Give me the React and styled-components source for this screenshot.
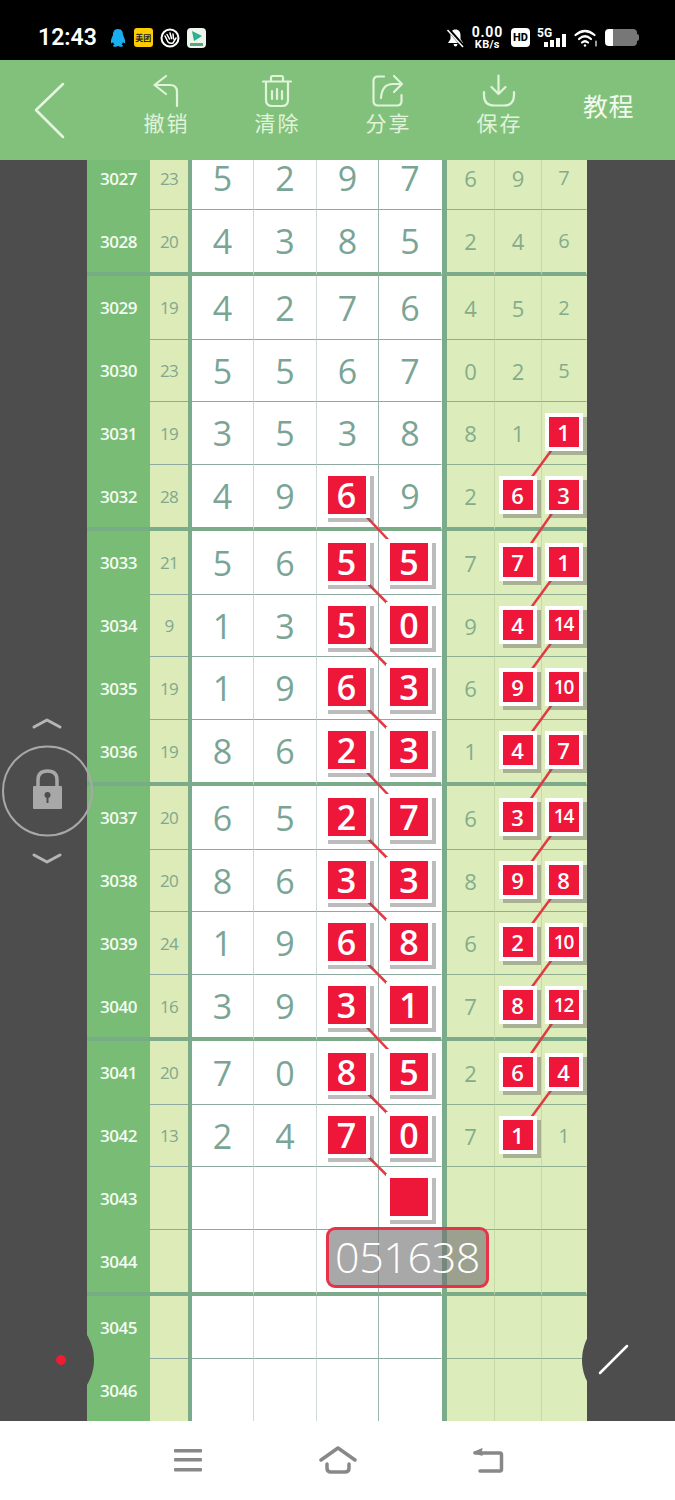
import React from 'react';
import styled, { createGlobalStyle } from 'styled-components';

const Global = createGlobalStyle`
  html, body { margin: 0; padding: 0; background: #fff; }
  * { box-sizing: border-box; }
`;
const CJK = '"Noto Sans CJK SC", "Noto Sans", sans-serif';
const NUM = '"Open Sans", "Noto Sans", sans-serif';

const Page = styled.div`
  width: 675px; height: 1500px; display: flex; flex-direction: column;
`;
const StatusBar = styled.div`
  height: 60px; background: #000; color: #fff; display: flex; align-items: center;
  justify-content: space-between; padding: 15px 38px 0 38px; flex: none;
`;
const StatusGroup = styled.div`
  display: flex; align-items: center; gap: ${p => p.$gap || 6}px;
`;
const Clock = styled.div`
  font: 600 23px Roboto, sans-serif; margin-right: 5px;
`;
const Yellow = styled.div`
  width: 19px; height: 19px; background: #ffcc00; border-radius: 3px; color: #222;
  font: 700 8px/19px ${CJK}; text-align: center;
`;
const Speed = styled.div`
  display: flex; flex-direction: column; align-items: center; font-family: Roboto, sans-serif; font-weight: 700;
`;
const SpeedTop = styled.span` font-size: 14px; line-height: 13px; letter-spacing: .8px; `;
const SpeedBottom = styled.span` font-size: 11px; line-height: 11px; letter-spacing: .3px; `;
const HD = styled.div`
  width: 19px; height: 19px; background: #fff; border-radius: 4px; color: #000;
  font: 800 11px/19px Roboto, sans-serif; text-align: center; margin-left: 1px;
`;
const Signal = styled.div` position: relative; width: 30px; height: 20px; `;
const FiveG = styled.span`
  position: absolute; left: 0; top: -1px; font: 700 12px/12px Roboto, sans-serif; color: #fff;
`;
const Battery = styled.div`
  width: 32px; height: 17px; border-radius: 4px; background: linear-gradient(90deg, #fff 0 8px, #777 8px);
  position: relative;
  &::after { content: ''; position: absolute; right: -2px; top: 5px; width: 2px; height: 7px; background: #777; border-radius: 0 2px 2px 0; }
`;

const Toolbar = styled.div`
  height: 100px; background: #82c17c; flex: none; display: grid; position: relative; z-index: 6;
  grid-template-columns: 110px repeat(5, 111px) 10px; color: #e0f4da;
`;
const BackCell = styled.div` padding: 22px 0 0 33px; `;
const Tool = styled.div`
  display: flex; flex-direction: column; align-items: center; padding-top: 14px;
`;
const ToolLabel = styled.div`
  font: 400 21px/24px ${CJK}; letter-spacing: 2px; margin-right: -2px; margin-top: 2px;
`;
const Tutorial = styled.div`
  font: 400 25px/100px ${CJK}; color: #f1faee; text-align: center; letter-spacing: .5px; margin-top: -5px; margin-left: -2px;
`;

const Stage = styled.div`
  flex: 1; background: #4d4d4d; display: flex; justify-content: flex-start; padding-left: 87px; position: relative;
`;
const Table = styled.div` width: 500px; height: 100%; position: relative; `;
const Row = styled.div`
  display: grid; height: ${p => p.$h}px;
  grid-template-columns: 63px 38px 4px 62px 63px 62px 63px 5px 48px 47px 45px;
`;
const Base = styled.div`
  display: flex; align-items: center; justify-content: center; line-height: 1;
  padding-bottom: ${p => p.$lift || 0}px;
  border-bottom: ${p => (p.$thick ? 4 : p.$last ? 0 : 1)}px solid ${p => (p.$thick ? '#7cab8a' : '#8ea99f')};
`;
const IdCell = styled(Base)`
  background: #79bc75; color: #f4fbf2; font: 600 17px/1 ${NUM}; letter-spacing: -.5px;
  border-bottom-color: ${p => (p.$thick ? '#76ad84' : '#79bc75')};
`;
const SumCell = styled(Base)`
  background: #dcebb8; color: #7fa88f; font: 400 17px/1 ${NUM}; letter-spacing: -.8px;
`;
const Sep = styled.div` background: #7cab8a; `;
const MainCell = styled(Base)`
  background: #fff; color: #7aa596; font: 500 34px/1 ${NUM};
  border-right: 1px solid ${p => (p.$dark ? '#9fb5b0' : p.$end ? 'transparent' : '#cfdad8')};
`;
const SideCell = styled(Base)`
  background: #dcecbb; color: #84ac8c; font: 500 ${p => (p.$end ? 20 : 22)}px/1 ${NUM};
  border-right: 1px solid ${p => (p.$end ? 'transparent' : '#c6d9a9')};
  border-bottom-color: ${p => (p.$thick ? '#7cab8a' : '#8fae90')};
`;
const BigMark = styled.div`
  width: 46px; height: 46px; flex: none; border: 4px solid #fff; background: #ee1639; color: #fff;
  box-shadow: 4px 4px 0 rgba(95, 95, 95, .42); position: relative; z-index: 2;
  display: flex; align-items: center; justify-content: center; font: 600 34px/1 ${NUM};
  margin: 0 2px 2px 0;
`;
const SmallMark = styled.div`
  width: 38px; height: 38px; flex: none; border: 4px solid #fff; background: #ee1639; color: #fff;
  box-shadow: 4px 4px 0 rgba(95, 95, 95, .42); position: relative; z-index: 2;
  display: flex; align-items: center; justify-content: center; font: 600 ${p => (p.$two ? 19 : 22)}px/1 ${NUM};
  letter-spacing: ${p => (p.$two ? -1 : 0)}px; margin: 0 1px 2px 0;
`;
const Links = styled.svg`
  position: absolute; left: 0; top: 0; z-index: 1; pointer-events: none;
`;
const Bubble = styled.div`
  position: absolute; left: 239px; top: 1067px; width: 163px; height: 61px; z-index: 3;
  border: 3px solid #e8324a; border-radius: 9px; background: rgba(115, 115, 115, .62);
  color: #fff; font: 300 43px/54px ${NUM}; text-align: center; letter-spacing: -.4px;
`;
const OverlayArt = styled.svg`
  position: absolute; left: 0; top: 0; z-index: 5; pointer-events: none;
`;
const NavBar = styled.div`
  height: 79px; background: #fff; flex: none; display: grid; justify-content: center;
  grid-template-columns: repeat(3, 150px); align-items: center; padding-bottom: 1px;
`;
const NavItem = styled.div` display: flex; justify-content: center; `;

const m = v => ({ m: v });
const heights = [50,66,64,62,63,66,64,62,63,66,64,62,63,66,64,62,63,66,63,62];
const TOP_LIFT = 13;
const data = [
  [3027,23,[5,2,9,7],[6,9,7]],
  [3028,20,[4,3,8,5],[2,4,6]],
  [3029,19,[4,2,7,6],[4,5,2]],
  [3030,23,[5,5,6,7],[0,2,5]],
  [3031,19,[3,5,3,8],[8,1,m(1)]],
  [3032,28,[4,9,m(6),9],[2,m(6),m(3)]],
  [3033,21,[5,6,m(5),m(5)],[7,m(7),m(1)]],
  [3034,9,[1,3,m(5),m(0)],[9,m(4),m(14)]],
  [3035,19,[1,9,m(6),m(3)],[6,m(9),m(10)]],
  [3036,19,[8,6,m(2),m(3)],[1,m(4),m(7)]],
  [3037,20,[6,5,m(2),m(7)],[6,m(3),m(14)]],
  [3038,20,[8,6,m(3),m(3)],[8,m(9),m(8)]],
  [3039,24,[1,9,m(6),m(8)],[6,m(2),m(10)]],
  [3040,16,[3,9,m(3),m(1)],[7,m(8),m(12)]],
  [3041,20,[7,0,m(8),m(5)],[2,m(6),m(4)]],
  [3042,13,[2,4,m(7),m(0)],[7,m(1),1]],
  [3043,'',['','','',m('')],['','','']],
  [3044,'',['','','',''],['','','']],
  [3045,'',['','','',''],['','','']],
  [3046,'',['','','',''],['','','']],
];
const thickRows = new Set([1,5,9,13,17]);
const centers = (() => {
  let y = 0;
  return heights.map((h, i) => {
    const bar = thickRows.has(i) ? 4 : i === heights.length - 1 ? 0 : 1;
    const c = y + (h - bar) / 2;
    y += h;
    return c;
  });
})();
const X_C3 = 260, X_C4 = 322.5, X_R2 = 431, X_R3 = 477;

const links = [];
data.forEach((row, i) => {
  const next = data[i + 1];
  if (!next) return;
  if (row[2][2] && row[2][2].m !== undefined && next[2][3] && next[2][3].m !== undefined)
    links.push([X_C3, centers[i], X_C4, centers[i + 1]]);
  if (row[3][2] && row[3][2].m !== undefined && next[3][1] && next[3][1].m !== undefined)
    links.push([X_R3, centers[i], X_R2, centers[i + 1]]);
});

const Undo = () => (
  <svg width="30" height="34" viewBox="0 0 30 34" fill="none" stroke="currentColor" strokeWidth="2.2" strokeLinecap="round" strokeLinejoin="round">
    <path d="M15 2 L3.5 11 L15 20" />
    <path d="M4 11 H19 Q26 11 26 18 V32" />
  </svg>
);
const Trash = () => (
  <svg width="30" height="34" viewBox="0 0 30 34" fill="none" stroke="currentColor" strokeWidth="2.2" strokeLinecap="round" strokeLinejoin="round">
    <path d="M1 7.5 H29" />
    <path d="M9 7 V3.5 Q9 2 10.5 2 H19.5 Q21 2 21 3.5 V7" />
    <path d="M4 8 V26 Q4 32 10 32 H20 Q26 32 26 26 V8" />
    <path d="M10 17 V25 M15 15 V25 M20 17 V25" />
  </svg>
);
const Share = () => (
  <svg width="34" height="34" viewBox="0 0 34 34" fill="none" stroke="currentColor" strokeWidth="2.2" strokeLinecap="round" strokeLinejoin="round">
    <path d="M13 2.5 H7 Q2.5 2.5 2.5 7 V27 Q2.5 31.5 7 31.5 H26 Q30.5 31.5 30.5 27 V21" />
    <path d="M23 2 L31 10 L23 18" />
    <path d="M30 10 H22 Q11 10 10 24" />
  </svg>
);
const Save = () => (
  <svg width="34" height="34" viewBox="0 0 34 34" fill="none" stroke="currentColor" strokeWidth="2.2" strokeLinecap="round" strokeLinejoin="round">
    <path d="M16.5 1.5 V20 M9.5 13 L16.5 20 L23.5 13" />
    <path d="M2 18 V21 Q2 31.5 12 31.5 H22 Q32 31.5 32 21 V18" />
  </svg>
);
const tools = [['撤销', Undo], ['清除', Trash], ['分享', Share], ['保存', Save]];

const renderMain = (v, j, flags) => {
  const marked = v && v.m !== undefined;
  return (
    <MainCell key={j} {...flags} $dark={j === 2} $end={j === 3}>
      {marked ? <BigMark>{v.m}</BigMark> : v}
    </MainCell>
  );
};
const renderSide = (v, j, flags) => {
  const marked = v && v.m !== undefined;
  return (
    <SideCell key={j} {...flags} $end={j === 2}>
      {marked ? <SmallMark $two={v.m > 9}>{v.m}</SmallMark> : v}
    </SideCell>
  );
};

export default function App() {
  return (
    <Page>
      <Global />
      <StatusBar>
        <StatusGroup $gap={7}>
          <Clock>12:43</Clock>
          <svg width="18" height="20" viewBox="0 0 18 20">
            <path d="M9 1 C5 1 4 4 4 7 C3 9 1.500 12 2 15 C3 15.500 4 14.500 4 14 C4.500 15.500 5 16 5.500 16.500 C4 17 3.500 18 4.500 18.500 C6 19 8 18.500 9 18 C10 18.500 12 19 13.500 18.500 C14.500 18 14 17 12.500 16.500 C13 16 13.500 15.500 14 14 C14 14.500 15 15.500 16 15 C16.500 12 15 9 14 7 C14 4 13 1 9 1 Z" fill="#19aef0" />
          </svg>
          <Yellow>美团</Yellow>
          <svg width="20" height="20" viewBox="0 0 20 20" fill="none">
            <circle cx="10" cy="10" r="8.500" stroke="#fff" strokeWidth="2" />
            <path d="M5 8 L8 14 Q10 16 13 15 L16 10 M7 6.500 L9.500 11 M10 5 L11.500 10.500 M13 6 L13.500 11" stroke="#fff" strokeWidth="1.500" strokeLinecap="round" />
          </svg>
          <svg width="19" height="20" viewBox="0 0 19 20">
            <rect width="19" height="20" rx="4" fill="#eef5ee" />
            <path d="M5 3 L15 8 L7 13 Z" fill="#27b36b" />
            <path d="M7 5.500 L12 8 L8 10.500 Z" fill="#2fa8e0" />
            <rect x="3" y="15" width="13" height="3" fill="#5aa777" />
          </svg>
        </StatusGroup>
        <StatusGroup $gap={7}>
          <svg width="19" height="20" viewBox="0 0 19 20" fill="#fff">
            <path d="M9.500 1.500 C6 1.500 4.500 4 4.500 7 V11 L2 15 H17 L14.500 11 V7 C14.500 4 13 1.500 9.500 1.500 Z M7.500 16 H11.500 Q11 18.500 9.500 18.500 Q8 18.500 7.500 16 Z" />
            <path d="M2.500 1.500 L17 18" stroke="#000" strokeWidth="3.500" />
            <path d="M1.500 2 L17 19" stroke="#fff" strokeWidth="1.500" />
          </svg>
          <Speed>
            <SpeedTop>0.00</SpeedTop>
            <SpeedBottom>KB/s</SpeedBottom>
          </Speed>
          <HD>HD</HD>
          <Signal>
            <FiveG>5G</FiveG>
            <svg width="30" height="20" viewBox="0 0 30 20" fill="#fff">
              <rect x="7" y="14" width="4" height="5" />
              <rect x="13" y="12" width="4" height="7" />
              <rect x="19" y="10" width="4" height="9" />
              <rect x="25" y="6" width="4" height="13" />
            </svg>
          </Signal>
          <svg width="24" height="20" viewBox="0 0 24 20" fill="none" stroke="#fff" strokeWidth="2.200" strokeLinecap="round">
            <path d="M1.500 7 Q11 -1 20.500 7" />
            <path d="M5 11 Q11 5.500 17 11" />
            <path d="M8 14.500 Q11 12 14 14.500" />
            <circle cx="11" cy="17.500" r="1.200" fill="#fff" stroke="none" />
            <path d="M22 13 V18" strokeWidth="1.200" />
          </svg>
          <Battery />
        </StatusGroup>
      </StatusBar>

      <Toolbar>
        <BackCell>
          <svg width="34" height="58" viewBox="0 0 34 58" fill="none" stroke="#e6f6e2" strokeWidth="2.500" strokeLinecap="round" strokeLinejoin="round">
            <path d="M30 2 L3 28 L30 55" />
          </svg>
        </BackCell>
        {tools.map(([label, Icon]) => (
          <Tool key={label}>
            <Icon />
            <ToolLabel>{label}</ToolLabel>
          </Tool>
        ))}
        <Tutorial>教程</Tutorial>
      </Toolbar>

      <Stage>
        <Table>
          <Links width="500" height="1261">
            {links.map((l, i) => (
              <line key={i} x1={l[0]} y1={l[1]} x2={l[2]} y2={l[3]} stroke="#e23a44" strokeWidth="2.500" />
            ))}
          </Links>
          {data.map((row, i) => {
            const flags = {
              $thick: thickRows.has(i),
              $last: i === data.length - 1,
              $lift: i === 0 ? TOP_LIFT : 0,
            };
            return (
              <Row key={row[0]} $h={heights[i]}>
                <IdCell {...flags}>{row[0]}</IdCell>
                <SumCell {...flags}>{row[1]}</SumCell>
                <Sep />
                {row[2].map((v, j) => renderMain(v, j, flags))}
                <Sep />
                {row[3].map((v, j) => renderSide(v, j, flags))}
              </Row>
            );
          })}
          <Bubble>051638</Bubble>
        </Table>
        <OverlayArt width="675" height="1261" viewBox="0 160 675 1261" fill="none">
          <circle cx="46" cy="1360" r="48" fill="#4d4d4d" />
          <circle cx="630" cy="1360" r="48" fill="#4d4d4d" />
          <circle cx="61" cy="1360" r="5" fill="#f01c34" />
          <path d="M600 1373 L627 1346" stroke="#fff" strokeWidth="2.500" strokeLinecap="round" />
          <circle cx="47.500" cy="791" r="44.500" stroke="#a8a8a8" strokeWidth="2" />
          <path d="M34 727 L47 720 L60 727" stroke="#b5b5b5" strokeWidth="3" strokeLinecap="round" strokeLinejoin="round" />
          <path d="M34 855 L47 862 L60 855" stroke="#b5b5b5" strokeWidth="3" strokeLinecap="round" strokeLinejoin="round" />
          <path d="M38 786 V780 Q38 771 47.500 771 Q57 771 57 780 V786" stroke="#a8a8a8" strokeWidth="3.500" />
          <rect x="33" y="786" width="29" height="23" rx="1" fill="#a8a8a8" />
          <circle cx="47.500" cy="795" r="3" fill="#4d4d4d" />
          <path d="M46.500 796 H48.500 V803 H46.500 Z" fill="#4d4d4d" />
        </OverlayArt>
      </Stage>

      <NavBar>
        <NavItem>
          <svg width="30" height="24" viewBox="0 0 30 24" fill="#888">
            <rect x="1" y="1" width="28" height="3.500" rx="1" />
            <rect x="1" y="10" width="28" height="3.500" rx="1" />
            <rect x="1" y="20" width="28" height="3.500" rx="1" />
          </svg>
        </NavItem>
        <NavItem>
          <svg width="38" height="28" viewBox="0 0 38 28" fill="none" stroke="#888" strokeWidth="3.500" strokeLinecap="round" strokeLinejoin="round">
            <path d="M2 14 L19 2 L36 14" />
            <path d="M8 18 V22 Q8 26 12 26 H26 Q30 26 30 22 V18" />
          </svg>
        </NavItem>
        <NavItem>
          <svg width="32" height="26" viewBox="0 0 32 26" fill="none" stroke="#888" strokeWidth="3.500" strokeLinecap="round" strokeLinejoin="round">
            <path d="M3 6 H28 Q29.500 6 29.500 8 V22 Q29.500 24 28 24 H8" />
            <path d="M10 2 L2 5.500 L10 8" fill="#888" strokeWidth="1.500" />
          </svg>
        </NavItem>
      </NavBar>
    </Page>
  );
}
